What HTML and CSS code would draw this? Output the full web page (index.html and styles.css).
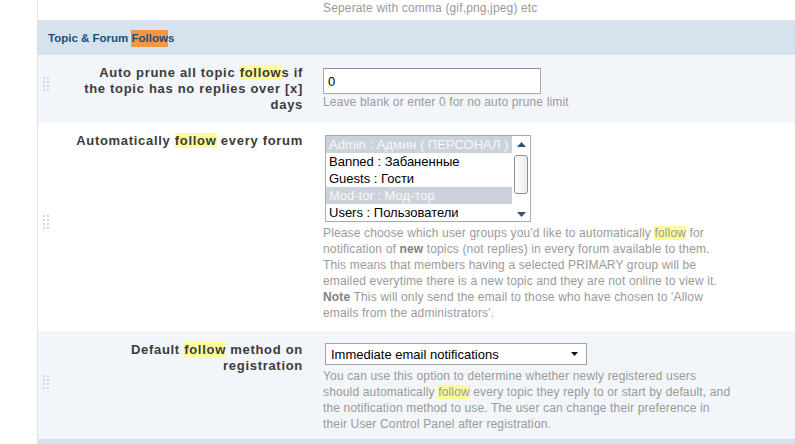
FILE: index.html
```html
<!DOCTYPE html>
<html lang="en">
<head>
<meta charset="utf-8">
<title>Topic &amp; Forum Follows</title>
<link rel="stylesheet" href="styles.css">
</head>
<body>
<div class="page">
  <div class="gutter"></div>
  <div class="main">
    <div class="row row-prev">
      <span></span>
      <span></span>
      <div class="value"><p class="help prev-help">Seperate with comma (gif,png,jpeg) etc</p></div>
    </div>

    <div class="section-header"><h3>Topic &amp; Forum <span class="hl-orange">Follow</span>s</h3></div>

    <div class="row alt row-1">
      <span class="handle"><svg width="6" height="14" viewBox="0 0 6 14"><g fill="#d2d6da"><rect x="0" y="0" width="2" height="2"/><rect x="4" y="0" width="2" height="2"/><rect x="0" y="4" width="2" height="2"/><rect x="4" y="4" width="2" height="2"/><rect x="0" y="8" width="2" height="2"/><rect x="4" y="8" width="2" height="2"/><rect x="0" y="12" width="2" height="2"/><rect x="4" y="12" width="2" height="2"/></g></svg></span>
      <label class="label" for="prune">Auto prune all topic <mark>follow</mark>s if<br>the topic has no replies over [x]<br>days</label>
      <div class="value">
        <input class="text-input" id="prune" type="text" value="0">
        <p class="help">Leave blank or enter 0 for no auto prune limit</p>
      </div>
    </div>

    <div class="row row-2">
      <span class="handle"><svg width="6" height="14" viewBox="0 0 6 14"><g fill="#d2d6da"><rect x="0" y="0" width="2" height="2"/><rect x="4" y="0" width="2" height="2"/><rect x="0" y="4" width="2" height="2"/><rect x="4" y="4" width="2" height="2"/><rect x="0" y="8" width="2" height="2"/><rect x="4" y="8" width="2" height="2"/><rect x="0" y="12" width="2" height="2"/><rect x="4" y="12" width="2" height="2"/></g></svg></span>
      <div class="label">Automatically <mark>follow</mark> every forum</div>
      <div class="value">
        <div class="listbox" role="listbox" aria-multiselectable="true">
          <ul class="options">
            <li class="selected">Admin : Админ ( ПЕРСОНАЛ )</li>
            <li>Banned : Забаненные</li>
            <li>Guests : Гости</li>
            <li class="selected">Mod-tor : Мод-тор</li>
            <li>Users : Пользователи</li>
          </ul>
          <div class="scrollbar">
            <svg class="arrow" width="9" height="5" viewBox="0 0 9 5"><path d="M0 5 L4.5 0 L9 5 Z" fill="#2d5479"/></svg>
            <div class="thumb"></div>
            <svg class="arrow" width="9" height="5" viewBox="0 0 9 5"><path d="M0 0 L9 0 L4.5 5 Z" fill="#2d5479"/></svg>
          </div>
        </div>
        <p class="help help-list">Please choose which user groups you'd like to automatically <mark>follow</mark> for<br>notification of <b>new</b> topics (not replies) in every forum available to them.<br>This means that members having a selected PRIMARY group will be<br>emailed everytime there is a new topic and they are not online to view it.<br><b>Note</b> This will only send the email to those who have chosen to 'Allow<br>emails from the administrators'.</p>
      </div>
    </div>

    <div class="row alt row-3">
      <span class="handle"><svg width="6" height="14" viewBox="0 0 6 14"><g fill="#d2d6da"><rect x="0" y="0" width="2" height="2"/><rect x="4" y="0" width="2" height="2"/><rect x="0" y="4" width="2" height="2"/><rect x="4" y="4" width="2" height="2"/><rect x="0" y="8" width="2" height="2"/><rect x="4" y="8" width="2" height="2"/><rect x="0" y="12" width="2" height="2"/><rect x="4" y="12" width="2" height="2"/></g></svg></span>
      <div class="label">Default <mark>follow</mark> method on<br>registration</div>
      <div class="value">
        <div class="select">
          <span>Immediate email notifications</span>
          <svg width="7" height="4" viewBox="0 0 7 4"><path d="M0 0 L7 0 L3.5 4 Z" fill="#111"/></svg>
        </div>
        <p class="help help-select">You can use this option to determine whether newly registered users<br>should automatically <mark>follow</mark> every topic they reply to or start by default, and<br>the notification method to use. The user can change their preference in<br>their User Control Panel after registration.</p>
      </div>
    </div>

    <div class="section-header"></div>
  </div>
</div>
</body>
</html>
```

FILE: styles.css
```css
html, body {
  margin: 0;
  padding: 0;
  background: #ffffff;
  overflow: hidden;
}

body {
  font-family: "Liberation Sans", Arial, sans-serif;
  width: 795px;
  height: 444px;
}

.page {
  display: flex;
  height: 444px;
  overflow: hidden;
}

.gutter {
  width: 37px;
  flex: none;
  background: #ffffff;
}

.main {
  flex: 1;
  border-left: 1px solid #dfe3e8;
  display: flex;
  flex-direction: column;
  min-width: 0;
}

.row {
  display: grid;
  grid-template-columns: 25px 240px 1fr;
  background: #ffffff;
  flex: none;
}

.row.alt {
  background: #f2f5f9;
}

.row-prev {
  height: 20px;
  overflow: hidden;
}

.prev-help {
  margin-top: -6px;
}

.handle {
  align-self: center;
  padding-left: 5px;
  display: flex;
}

.label {
  text-align: right;
  font-size: 13px;
  font-weight: bold;
  line-height: 16px;
  color: #3b3b3b;
  padding-top: 10px;
  letter-spacing: 0.7px;
  white-space: nowrap;
}

.value {
  padding-left: 20px;
  padding-top: 10px;
}

.row-prev .value {
  padding-top: 0;
}

.row-1 { padding-bottom: 10px; }
.row-2 { padding-bottom: 10px; }
.row-3 { padding-top: 1px; padding-bottom: 7px; }

mark {
  background: #fcfc98;
  color: inherit;
}

.help {
  margin: 0;
  font-size: 12px;
  line-height: 16px;
  color: #9a9a9a;
  letter-spacing: 0.15px;
  white-space: nowrap;
}

.help b {
  color: #808080;
}

.section-header {
  height: 35px;
  background: #d6e3ef;
  flex: none;
  display: flex;
  align-items: center;
  padding-left: 10px;
}

.section-header h3 {
  margin: 0;
  font-size: 11.5px;
  font-weight: bold;
  color: #1e4c79;
}

.hl-orange {
  background: #f29845;
  padding: 2px 0 3px;
}

.text-input {
  display: block;
  box-sizing: border-box;
  width: 218px;
  height: 26px;
  margin: 3px 0 0 0;
  padding: 0 4px;
  border: 1px solid #a9a9a9;
  border-top-color: #8f8f8f;
  background: #ffffff;
  font-family: "Liberation Sans", Arial, sans-serif;
  font-size: 13px;
  color: #000;
  outline: none;
}

.listbox {
  box-sizing: border-box;
  width: 206px;
  height: 87px;
  margin: 2px 0 0 2px;
  border: 1px solid #a2aab3;
  background: #ffffff;
  display: flex;
}

.options {
  list-style: none;
  margin: 0;
  padding: 0;
  flex: 1;
  min-width: 0;
  overflow: hidden;
}

.options li {
  height: 17px;
  line-height: 17px;
  padding-left: 3px;
  font-size: 13px;
  color: #000;
  white-space: nowrap;
  overflow: hidden;
}

.options li.selected {
  background: #ccd2db;
  color: #f7f8fa;
}

.scrollbar {
  width: 18px;
  flex: none;
  display: flex;
  flex-direction: column;
  align-items: center;
  padding: 6px 0 4px;
  box-sizing: border-box;
}

.thumb {
  width: 14px;
  height: 39px;
  box-sizing: border-box;
  margin: 8px 0 auto;
  border: 1px solid #8a9098;
  border-radius: 3px;
  background: linear-gradient(to right, #ffffff, #e9eaec);
}

.help-list {
  margin-top: 3px;
}

.select {
  box-sizing: border-box;
  width: 262px;
  height: 22px;
  margin: 1px 0 0 2px;
  border: 1px solid #a4a4a4;
  background: #ffffff;
  display: flex;
  align-items: center;
  justify-content: space-between;
  padding: 0 8px 0 5px;
  font-size: 13px;
  color: #000;
}

.help-select {
  margin-top: 3px;
}
```
